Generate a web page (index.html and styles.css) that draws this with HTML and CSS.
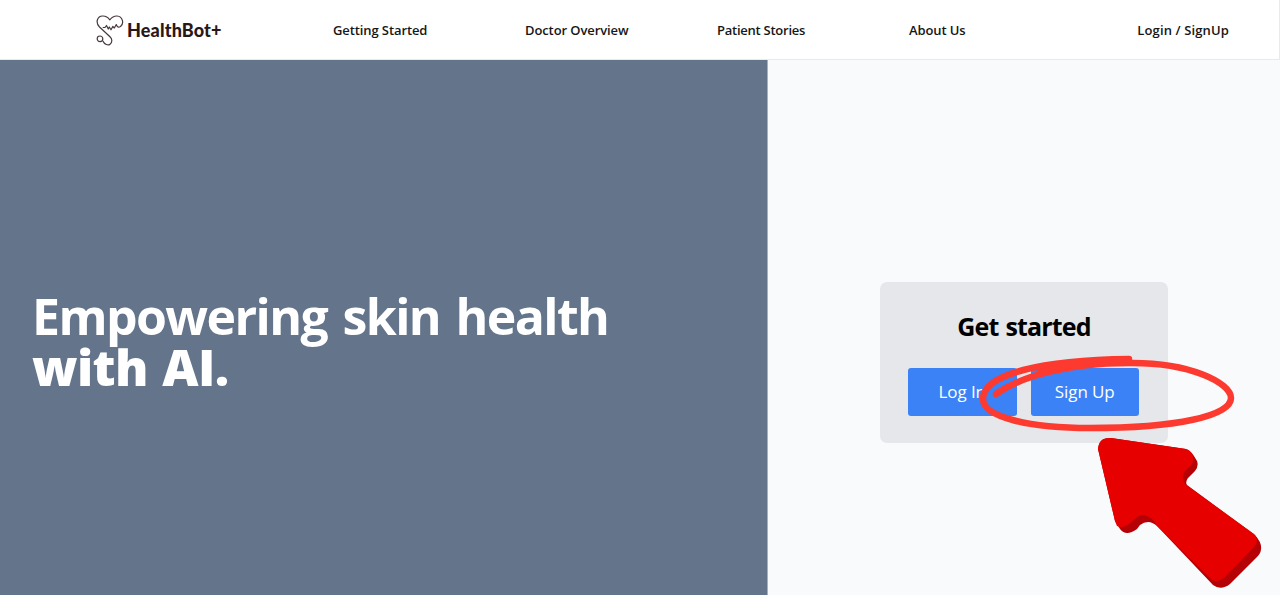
FILE: index.html
```html
<!DOCTYPE html>
<html lang="en">
<head>
<meta charset="utf-8">
<title>HealthBot+</title>
<link rel="stylesheet" href="styles.css">
</head>
<body>
<header class="navbar">
  <a class="brand">
    <svg class="brand-icon" viewBox="0 0 28 32" width="28" height="32">
      <path d="M7 26.200 C8.500 29.500 12 30.800 14 29.200 C16.500 27.200 16.300 24 14 21.800 L3.500 12 C-1 7 1.500 1.200 6.500 1 Q11 .8 13.800 4.800 Q17 .8 21 1 C26.500 1.500 28.500 8 24.500 11.500 Q21.500 13.500 20.300 9.500 L18.300 13 L16.800 11.500 L15 14.800 L13.300 12 L12.300 14 L10.500 10.500 L9 12.500 H7.200"/>
      <circle cx="4" cy="23.800" r="2.800"/>
    </svg>
    <span class="brand-name">HealthBot+</span>
  </a>
  <nav class="links">
    <a>Getting Started</a>
    <a>Doctor Overview</a>
    <a class="tight">Patient Stories</a>
    <a>About Us</a>
  </nav>
  <a class="account">Login / SignUp</a>
</header>
<main class="page">
  <section class="hero">
    <h1><span class="line-one">Empowering skin health</span><br><span class="line-two">with AI.</span></h1>
  </section>
  <section class="panel">
    <div class="card">
      <h2>Get started</h2>
      <div class="actions">
        <button class="log-in">Log In</button>
        <button>Sign Up</button>
      </div>
    </div>
  </section>
</main>
<svg class="annotation" viewBox="0 0 1280 595" width="1280" height="595">
  <path class="ring" d="M996 394 C1020 377 1066 363 1128 363 C1190 362 1231 383 1231 398 C1231 416 1176 428 1090 428 C1029 428 983 417 983 399 C983 374 1042 360 1129 359"/>
  <path class="ring-fill" d="M1037 370 Q1075 358 1130 356 L1132 365 Q1080 364 1038 374Z"/>
  <path class="arrow-side" d="M1098 449 Q1099 437 1111 438 L1186 449 Q1191 450 1197 461 Q1199 466 1195 471 L1188 478 Q1185 482 1187 485 L1255 535 Q1262 543 1261 549 Q1261 553 1257 557 L1230 584 Q1221 591 1213 585 L1158 527 Q1149 518 1140 525 L1137 529 Q1126 537 1120 529 L1115 521Z"/>
  <path class="arrow-face" d="M1098 449 Q1099 437 1111 438 L1186 449 Q1190 450 1192 454 Q1195 460 1191 465 L1185 471 Q1180 479 1186 485 L1254 534 Q1260 540 1254 547 L1226 576 Q1219 583 1212 580 L1158 527 L1153 520 Q1144 512 1137 517 L1129 524 Q1123 529 1117 526 L1115 521Z"/>
</svg>
</body>
</html>
```
FILE: styles.css
```css
* { box-sizing: border-box; }
body {
  margin: 0;
  height: 595px;
  overflow: hidden;
  display: flex;
  flex-direction: column;
  background: #f9fafc;
  font-family: "Open Sans", "Noto Sans", sans-serif;
}
.navbar {
  height: 60px;
  display: flex;
  align-items: center;
  padding: 0 50px 0 96px;
  background: #fff;
  border-bottom: 1px solid #e7ebf1;
  border-right: 1px solid #e7ebf1;
  color: #161616;
  font-size: 13px;
  font-weight: 600;
  letter-spacing: -0.1px;
  white-space: nowrap;
}
.brand { width: 237px; display: flex; align-items: center; gap: 3px; }
.brand-icon { fill: none; stroke: #46383a; stroke-width: 1.2; stroke-linejoin: round; stroke-linecap: round; margin-top: 3px; }
.brand-name { font-family: Lato, sans-serif; font-size: 18px; font-weight: 900; letter-spacing: 0.15px; color: #2a1717; }
.links { display: grid; grid-template-columns: repeat(4, 192px); }
.links .tight { letter-spacing: -0.25px; }
.account { margin-left: auto; letter-spacing: 0.13px; }
.page { flex: 1; display: flex; }
.hero { width: 768px; display: flex; align-items: center; padding: 29px 33px 0; background: #64748b; border-right: 1px solid #a6afbc; }
.hero h1 { margin: 0; color: #fff; font-size: 50px; line-height: 51px; font-weight: 700; white-space: nowrap; }
.line-one { letter-spacing: -1.6px; word-spacing: 4px; margin-left: -1px; }
.line-two { font-weight: 800; letter-spacing: -0.6px; word-spacing: 2px; margin-left: -1px; }
.panel { flex: 1; display: flex; align-items: center; justify-content: center; padding-top: 70px; }
.card { width: 288px; height: 161px; border-radius: 7px; background: #e5e7eb; padding: 25px 28px; }
.card h2 { margin: 0 0 23px; font-size: 25px; line-height: 38px; letter-spacing: -0.85px; word-spacing: 1.5px; text-align: center; font-weight: 700; color: #000; }
.actions { display: flex; gap: 14px; }
.actions button { width: 108.5px; height: 48px; padding: 0 0 2px; border: 0; border-radius: 3px; background: #3b82f6; color: #fff; font: 400 17px "Open Sans", sans-serif; letter-spacing: -0.1px; }
.annotation { position: absolute; left: 0; top: 0; }
.ring { fill: none; stroke: #fd3a2f; stroke-width: 6.5; stroke-linecap: round; stroke-linejoin: round; }
.ring-fill { fill: #fd3a2f; }
.arrow-side { fill: #b50006; }
.arrow-face { fill: #e60000; }
```
